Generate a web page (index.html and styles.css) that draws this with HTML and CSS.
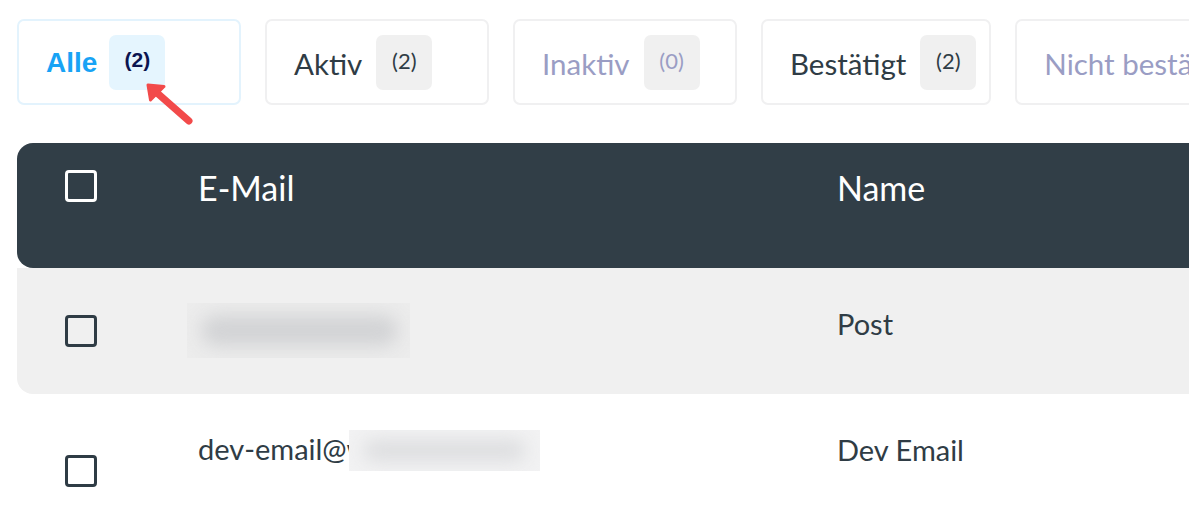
FILE: index.html
```html
<!DOCTYPE html>
<html lang="de">
<head>
<meta charset="utf-8">
<title>Abonnenten</title>
<link rel="stylesheet" href="styles.css">
</head>
<body>
<div class="page">
  <div class="tabs">
    <div class="tab active"><span class="tab-label">Alle</span><span class="badge">(2)</span></div>
    <div class="tab"><span class="tab-label">Aktiv</span><span class="badge">(2)</span></div>
    <div class="tab muted"><span class="tab-label">Inaktiv</span><span class="badge">(0)</span></div>
    <div class="tab"><span class="tab-label">Bestätigt</span><span class="badge">(2)</span></div>
    <div class="tab muted"><span class="tab-label">Nicht bestätigt</span><span class="badge">(0)</span></div>
  </div>

  <div class="table">
    <div class="row head">
      <div class="cell-check"><span class="checkbox light"></span></div>
      <div class="cell">E-Mail</div>
      <div class="cell">Name</div>
    </div>
    <div class="row grey">
      <div class="cell-check"><span class="checkbox"></span></div>
      <div class="cell"><span class="blur blur-a"><span class="blur-core"></span></span></div>
      <div class="cell">Post</div>
    </div>
    <div class="row tall">
      <div class="cell-check"><span class="checkbox"></span></div>
      <div class="cell email">dev-email@w<span class="blur blur-b"><span class="blur-core"></span></span></div>
      <div class="cell">Dev Email</div>
    </div>
  </div>

  <svg class="arrow" width="60" height="60" viewBox="140 78 60 60" aria-hidden="true">
    <line x1="189" y1="121" x2="156" y2="92" stroke="#f24a4a" stroke-width="7" stroke-linecap="round"/>
    <path d="M148 85 L164 86.5 L150.5 100 Z" fill="#f24a4a" stroke="#f24a4a" stroke-width="3" stroke-linejoin="round"/>
  </svg>
</div>
</body>
</html>
```

FILE: styles.css
```css
html, body {
  margin: 0;
  padding: 0;
  background: #ffffff;
  overflow: hidden;
}

.page {
  position: relative;
  width: 1189px;
  height: 531px;
  overflow: hidden;
  padding: 19px 0 0 17px;
  box-sizing: border-box;
  font-family: Lato, "Noto Sans", sans-serif;
  color: #2f3c45;
}

.tabs {
  display: flex;
  gap: 24px;
  width: 1400px;
}

.tab {
  flex: none;
  box-sizing: border-box;
  min-width: 224px;
  height: 86px;
  padding: 2px 13px 0 27px;
  border: 2px solid #f0f0f1;
  border-radius: 7px;
  display: flex;
  align-items: center;
  gap: 14px;
  font-size: 29.5px;
  color: #2f3c45;
}

.tab-label {
  white-space: nowrap;
}

.badge {
  width: 56px;
  height: 55px;
  margin-top: -2px;
  border-radius: 7px;
  background: #f0f0f0;
  display: flex;
  align-items: center;
  justify-content: center;
  font-size: 22px;
  padding-bottom: 4px;
  box-sizing: border-box;
}

.tab.active {
  border-color: #e3f3fd;
  gap: 12px;
}

.tab.active .tab-label {
  color: #18a3f5;
  font-weight: 700;
  font-family: "Liberation Sans", Arial, sans-serif;
  font-size: 28px;
}

.tab.active .badge {
  background: #e5f5fe;
  color: #0b1450;
  font-weight: 700;
  font-family: "Liberation Sans", Arial, sans-serif;
  font-size: 21px;
}

.tab.muted {
  color: #9a9dc4;
}

.table {
  margin-top: 38px;
  width: 1400px;
}

.row {
  display: grid;
  grid-template-columns: 181px 639px 1fr;
  border-radius: 16px 0 0 16px;
}

.row.head {
  height: 125px;
  background: #313e47;
  color: #ffffff;
}

.row.head .cell-check {
  padding-top: 27px;
  align-items: flex-start;
}

.row.grey {
  height: 126px;
  background: #f0f0f0;
  border-radius: 0 0 0 16px;
}

.row.tall {
  height: 154px;
  background: #ffffff;
}

.cell {
  font-size: 29px;
  padding-top: 37px;
  line-height: 38px;
  white-space: nowrap;
}

.row.head .cell {
  font-size: 34px;
  line-height: 46px;
  padding-top: 22px;
}

.cell-check {
  display: flex;
  align-items: center;
  padding-left: 48px;
}

.checkbox {
  display: block;
  width: 32px;
  height: 32px;
  box-sizing: border-box;
  border: 3px solid #2f3c45;
  border-radius: 4px;
}

.checkbox.light {
  border-color: #ffffff;
}

.blur {
  display: inline-block;
  position: relative;
  overflow: hidden;
  vertical-align: top;
}

.blur-core {
  position: absolute;
  border-radius: 20px;
  filter: blur(9px);
}

.blur-a {
  width: 223px;
  height: 55px;
  margin: -2px 0 0 -11px;
  background: #ececec;
}

.blur-a .blur-core {
  left: 14px;
  right: 12px;
  top: 12px;
  bottom: 12px;
  background: #d2d3d5;
}

.email {
  padding-top: 36px;
}

.blur-b {
  width: 191px;
  height: 41px;
  margin: 0 0 0 -20px;
  background: #f2f2f3;
}

.blur-b .blur-core {
  left: 14px;
  right: 14px;
  top: 10px;
  bottom: 10px;
  background: #dcdddf;
}

.arrow {
  position: absolute;
  left: 140px;
  top: 78px;
}
```
